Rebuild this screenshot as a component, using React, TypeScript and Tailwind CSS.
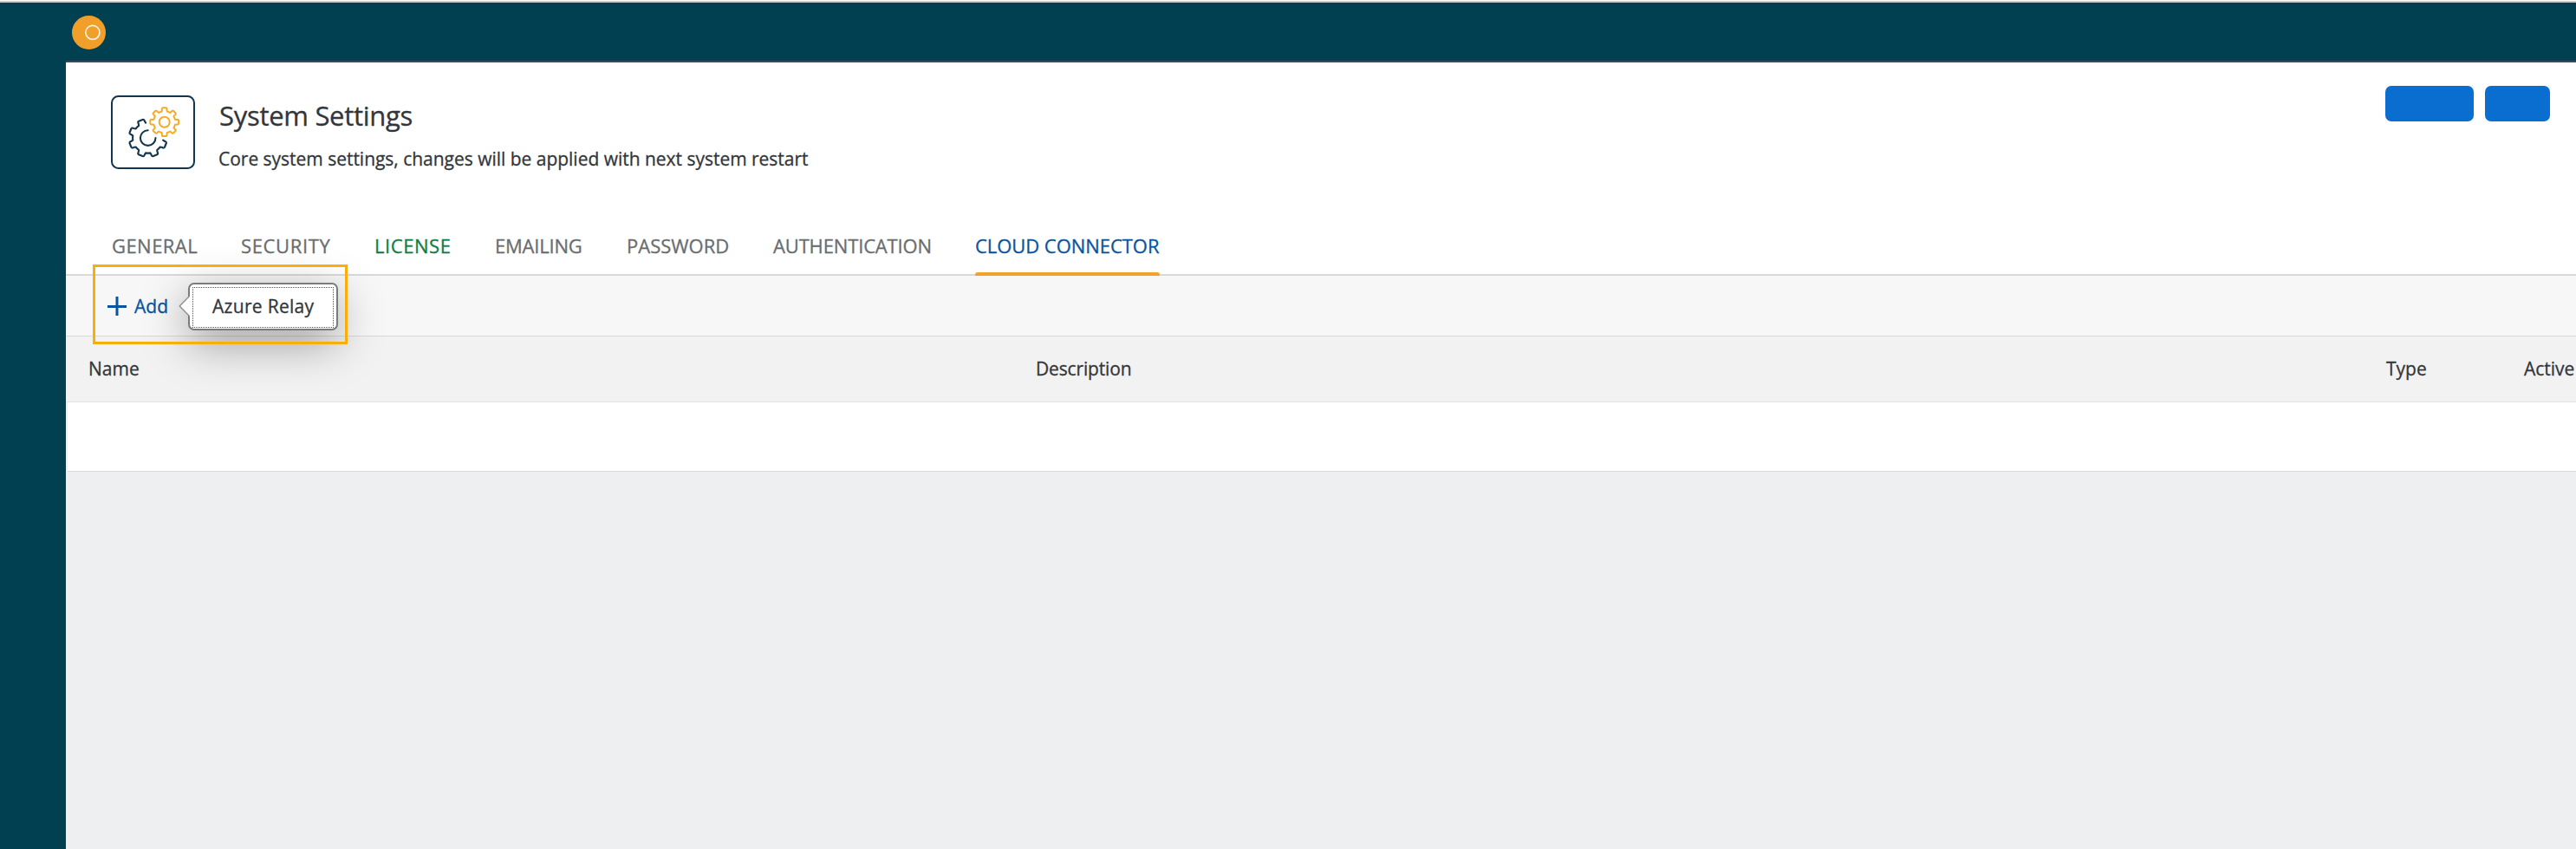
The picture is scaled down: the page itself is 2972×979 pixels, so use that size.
import { Fragment } from "react";

type Point = [number, number];

const point = (cx: number, cy: number, r: number, deg: number): Point => {
  const a = (deg * Math.PI) / 180;
  return [cx + r * Math.cos(a), cy - r * Math.sin(a)];
};

const fmt = ([x, y]: Point) => `${x.toFixed(2)} ${y.toFixed(2)}`;

/** Outline of a cog: one tooth for each angle, joined by valleys on the root circle. */
function cogPath(cx: number, cy: number, tip: number, root: number, teeth: number[], closed: boolean) {
  const parts: string[] = [];
  teeth.forEach((deg, i) => {
    const at = (r: number, d: number) => fmt(point(cx, cy, r, deg + d));
    const base = 14;
    const top = 11;
    const start = at(root, -base);
    parts.push(i === 0 ? `M${start}` : `A${root} ${root} 0 0 0 ${start}`);
    parts.push(`L${at(tip - 2, -top)}`);
    parts.push(`Q${at(tip, -top)} ${at(tip, -top + 5)}`);
    parts.push(`L${at(tip, top - 5)}`);
    parts.push(`Q${at(tip, top)} ${at(tip - 2, top)}`);
    parts.push(`L${at(root, base)}`);
  });
  if (closed) {
    parts.push(`A${root} ${root} 0 0 0 ${fmt(point(cx, cy, root, teeth[0] - 14))}Z`);
  }
  return parts.join("");
}

const smallCog = cogPath(61.7, 30.7, 16.5, 12.6, [0, 45, 90, 135, 180, 225, 270, 315], true);
const bigCog = cogPath(42.7, 49, 22, 17.6, [112.5, 157.5, 202.5, 247.5, 292.5, 337.5], false);

function SettingsIcon() {
  return (
    <svg width="97" height="85" viewBox="0 0 97 85" fill="none" strokeLinejoin="round" strokeLinecap="round">
      <rect x="1" y="1" width="95" height="83" rx="7.5" stroke="#12364f" strokeWidth="2" />
      <g stroke="#12364f" strokeWidth="2.1">
        <path d={bigCog} />
        <path d="M42.7 40.3A8.8 8.8 0 1 0 51.5 49.1" />
      </g>
      <g stroke="#f3ab28" strokeWidth="2">
        <path d={smallCog} />
        <circle cx="61.7" cy="30.7" r="6" />
      </g>
    </svg>
  );
}

const tabs = [
  { label: "GENERAL", style: "w-[98px] tracking-[0.45px] text-[#6a6d70]" },
  { label: "SECURITY", style: "w-[103px] tracking-[0.65px] text-[#6a6d70]" },
  { label: "LICENSE", style: "w-[88px] tracking-[0.55px] text-[#107e3e]" },
  { label: "EMAILING", style: "w-[101px] tracking-[-0.2px] text-[#6a6d70]" },
  { label: "PASSWORD", style: "w-[118px] tracking-[0px] text-[#6a6d70]" },
  { label: "AUTHENTICATION", style: "w-[182px] tracking-[-0.15px] text-[#6a6d70]" },
  { label: "CLOUD CONNECTOR", style: "w-[213px] tracking-[-0.05px] text-[#0854a0]", active: true },
];

function AddMenu() {
  return (
    <Fragment>
      <div className="absolute top-[8px] left-[141px] h-[55px] w-[173px] rounded-[7px] border-2 border-[#7b7b7b] bg-white p-[3px] shadow-[0_15px_52px_rgba(0,0,0,0.36)]">
        <div className="flex h-[47px] w-[163px] items-center border border-dotted border-[#555] pb-[3px] pl-[22px] leading-[28px] tracking-[0.3px] text-[#32363a]">
          <span className="whitespace-nowrap">Azure Relay</span>
        </div>
      </div>
      <svg className="absolute top-[22px] left-[130px]" width="14" height="26" viewBox="0 0 14 26">
        <path d="M14 1L12.5 1.5L1.2 13L12.5 24.5L14 25Z" fill="#fff" />
        <path d="M12.5 1.5L1.2 13L12.5 24.5" fill="none" stroke="#8a8a8a" strokeWidth="1.3" />
      </svg>
      <div className="pointer-events-none absolute top-[-13px] left-[31px] h-[92px] w-[294px] border-3 border-[#fbad0c]" />
    </Fragment>
  );
}

export default function App() {
  return (
    <div className="flex h-[979px] w-[2972px] flex-col overflow-hidden bg-[#004050] font-['Open_Sans','Noto_Sans',sans-serif] text-[21px] leading-[28px] text-[#32363a] [-webkit-text-stroke:0.3px]">
      <div className="h-[3px] shrink-0 border-t border-white bg-[#cccccc]" />
      <header className="flex h-[67px] shrink-0 pt-[15px] pl-[83px]">
        <svg width="39" height="39" viewBox="0 0 39 39">
          <circle cx="19.5" cy="19.5" r="19.5" fill="#f09f2b" />
          <circle cx="23.9" cy="19.4" r="8" fill="none" stroke="#fff1dc" strokeWidth="1.7" />
        </svg>
      </header>

      <main className="ml-[76px] flex min-h-0 flex-1 flex-col border-t-2 border-[#354a5f] bg-[#edeff0]">
        <section className="flex h-[197px] shrink-0 items-start bg-white pr-[30px] pl-[52px]">
          <div className="mt-[38px]">
            <SettingsIcon />
          </div>
          <div className="mt-[41px] ml-[27px] flex flex-1 flex-col gap-[16px] whitespace-nowrap">
            <h1 className="pl-[1px] text-[31px] leading-[40px] tracking-[-0.3px]">System Settings</h1>
            <p className="tracking-[-0.02px]">Core system settings, changes will be applied with next system restart</p>
          </div>
          <div className="mt-[27px] flex gap-[13px]">
            <button aria-label="Edit" className="h-[41px] w-[102px] rounded-[7px] bg-[#0a6ed1]" />
            <button aria-label="Back" className="h-[41px] w-[75px] rounded-[7px] bg-[#0a6ed1]" />
          </div>
        </section>

        <nav className="flex h-[49px] shrink-0 gap-[51px] border-b-2 border-[#d9d9d9] bg-white pl-[53px]">
          {tabs.map((tab) => (
            <div key={tab.label} className={`flex h-[49px] flex-col justify-between whitespace-nowrap ${tab.style}`}>
              <span className="text-[22px]">{tab.label}</span>
              {tab.active && <span className="h-[4px] rounded-t-[3px] bg-[#f3a12b]" />}
            </div>
          ))}
        </nav>

        <div className="relative z-10 flex h-[70px] shrink-0 items-center border-b border-[#d9d9d9] bg-[#f7f7f7] pl-[48px] text-[#0854a0]">
          <svg width="22" height="22" viewBox="0 0 22 22" fill="none" stroke="#0854a0" strokeWidth="3">
            <path d="M11 0V22M0 11.5H22" />
          </svg>
          <span className="ml-[9px]">Add</span>
          <AddMenu />
        </div>

        <div className="flex h-[76px] shrink-0 items-center border-b border-[#e5e5e5] bg-[#f2f2f2] pb-[2px] pl-[26px] whitespace-nowrap">
          <span className="w-[1093px]">Name</span>
          <span className="w-[1558px] tracking-[-0.15px]">Description</span>
          <span className="w-[159px]">Type</span>
          <span>Active</span>
        </div>
        <div className="ml-[2px] h-[80px] shrink-0 border-b border-[#d9d9d9] bg-white" />
      </main>
    </div>
  );
}
